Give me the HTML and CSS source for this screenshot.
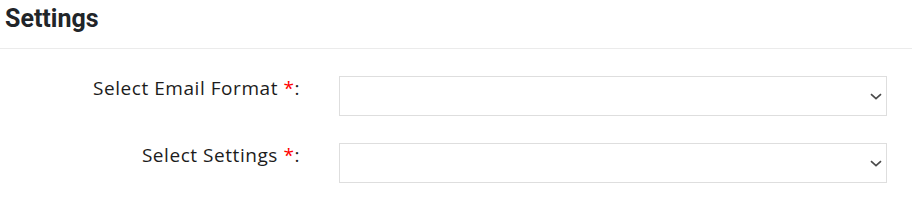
FILE: index.html
```html
<!DOCTYPE html>
<html lang="en">
<head>
  <meta charset="UTF-8">
  <meta name="viewport" content="width=device-width, initial-scale=1.0">
  <title>Settings</title>
  <link rel="stylesheet" href="styles.css">
</head>
<body>
  <div class="page-header">
    <h2>Settings</h2>
  </div>

  <form class="settings-form">
    <label for="email-format">Select Email Format <span class="req">*</span>:</label>
    <div class="select-wrap">
      <select id="email-format">
        <option value=""></option>
        <option value="html">HTML</option>
        <option value="text">Plain Text</option>
      </select>
      <svg class="chevron" width="12" height="7" viewBox="0 0 12 7"><path d="M1 1.2 L6 5.6 L11 1.2" fill="none" stroke="#4a4a4a" stroke-width="1.7"/></svg>
    </div>

    <label for="settings">Select Settings <span class="req">*</span>:</label>
    <div class="select-wrap">
      <select id="settings">
        <option value=""></option>
        <option value="default">Default</option>
      </select>
      <svg class="chevron" width="12" height="7" viewBox="0 0 12 7"><path d="M1 1.2 L6 5.6 L11 1.2" fill="none" stroke="#4a4a4a" stroke-width="1.7"/></svg>
    </div>
  </form>
</body>
</html>
```

FILE: styles.css
```css
body {
  margin: 0;
  padding: 0;
  background-color: white;
  color: #222;
  font-family: "Open Sans", sans-serif;
}

.page-header {
  padding: 4px 5px 0 5px;
  height: 44px;
  border-bottom: 1px solid #ebebeb;
}

.page-header h2 {
  margin: 0;
  font-family: Roboto, sans-serif;
  font-weight: 700;
  font-size: 25px;
  line-height: 30px;
  color: #212529;
}

.settings-form {
  display: grid;
  grid-template-columns: 300px 548px;
  column-gap: 39px;
  row-gap: 27px;
  margin-top: 27px;
  align-items: start;
}

.settings-form label {
  text-align: right;
  font-size: 19px;
  line-height: 24px;
  letter-spacing: 0.55px;
  color: #1c1c1c;
}

.req {
  color: #f00;
}

.select-wrap {
  position: relative;
  height: 40px;
}

.select-wrap select {
  appearance: none;
  -webkit-appearance: none;
  width: 100%;
  height: 40px;
  border: 1px solid #dedede;
  border-radius: 0;
  background: white;
  padding: 0 30px 0 10px;
  font-size: 15px;
  font-family: inherit;
  outline: none;
}

.chevron {
  position: absolute;
  right: 5px;
  top: 17px;
  pointer-events: none;
}
```
